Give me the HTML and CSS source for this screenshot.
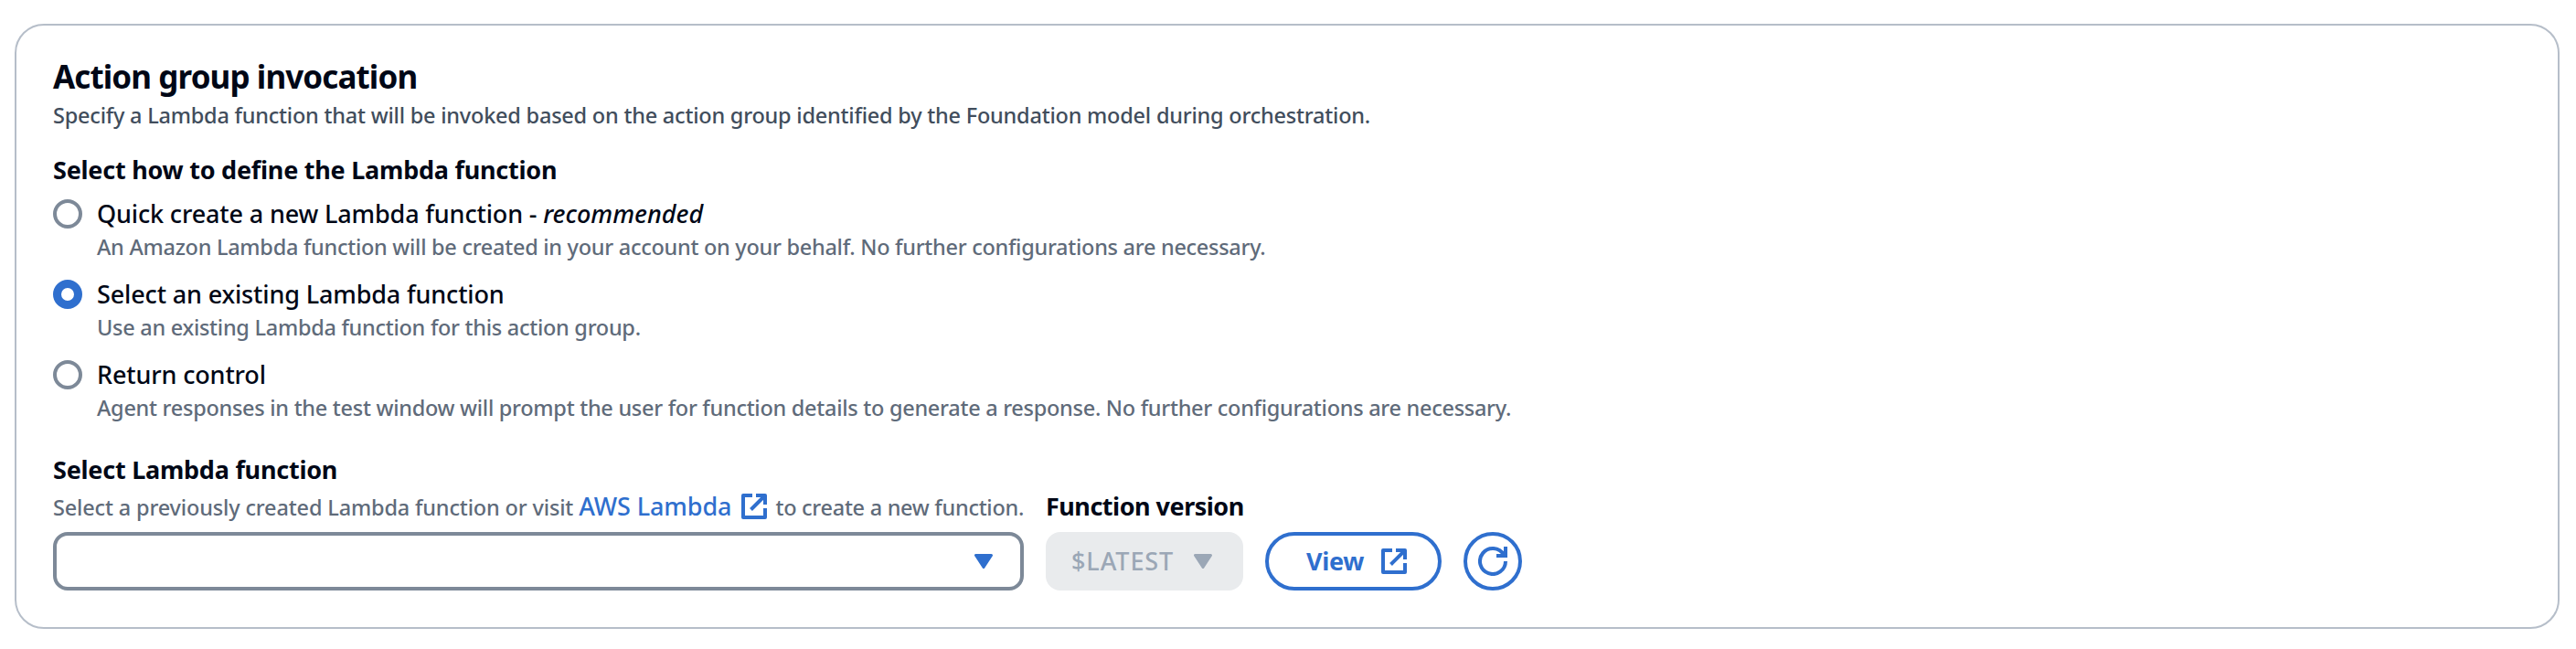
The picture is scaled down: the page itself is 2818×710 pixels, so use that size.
FILE: index.html
```
<!DOCTYPE html>
<html lang="en">
<head>
<meta charset="utf-8">
<title>Action group invocation</title>
<link rel="stylesheet" href="styles.css">
</head>
<body>
<section class="card">
  <h2 class="title">Action group invocation</h2>
  <p class="subtitle">Specify a Lambda function that will be invoked based on the action group identified by the Foundation model during orchestration.</p>

  <div class="label group-label">Select how to define the Lambda function</div>
  <div class="options">
    <div class="option">
      <span class="radio"></span>
      <div>
        <div class="option-label quick">Quick create a new Lambda function - <em>recommended</em></div>
        <div class="option-text">An Amazon Lambda function will be created in your account on your behalf. No further configurations are necessary.</div>
      </div>
    </div>
    <div class="option">
      <span class="radio radio-checked"></span>
      <div>
        <div class="option-label">Select an existing Lambda function</div>
        <div class="option-text">Use an existing Lambda function for this action group.</div>
      </div>
    </div>
    <div class="option">
      <span class="radio"></span>
      <div>
        <div class="option-label">Return control</div>
        <div class="option-text">Agent responses in the test window will prompt the user for function details to generate a response. No further configurations are necessary.</div>
      </div>
    </div>
  </div>

  <div class="fields">
    <div class="field function-field">
      <div class="label">Select Lambda function</div>
      <div class="hint"><span class="hint-lead">Select a previously created Lambda function or visit</span><a class="link">AWS Lambda<svg class="external" viewBox="0 0 28 28"><path d="M12 2H2V26H26V16M16 2H26V12M26 2L10.500 17.500"/></svg></a><span>to create a new function.</span></div>
      <div class="select">
        <svg class="caret" viewBox="0 0 20 16"><path d="M1.500 1.500H18.500L10 14.500Z"/></svg>
      </div>
    </div>
    <div class="field version-field">
      <div class="label version-label">Function version</div>
      <div class="select select-disabled">
        <span class="value">$LATEST</span>
        <svg class="caret" viewBox="0 0 20 16"><path d="M1.500 1.500H18.500L10 14.500Z"/></svg>
      </div>
    </div>
    <button class="button"><span class="value">View</span><svg class="external" viewBox="0 0 28 28"><path d="M12 2H2V26H26V16M16 2H26V12M26 2L10.500 17.500"/></svg></button>
    <button class="button button-round" aria-label="Refresh"><svg class="refresh" viewBox="0 0 32 32"><path d="M30 16A14 14 0 1 1 28 8.800M30 0V10H20"/></svg></button>
  </div>
</section>
</body>
</html>
```
FILE: styles.css
```
* { box-sizing: border-box; }

body {
  margin: 0;
  padding: 26px 18px 22px 16px;
  background: #fff;
  color: #000716;
  font-family: "Noto Sans", "Open Sans", sans-serif;
  font-size: 27px;
  font-weight: 500;
}

.card {
  height: 662px;
  padding: 34px 40px 40px;
  border: 2px solid #b6bec9;
  border-radius: 32px;
}

.title {
  margin: 0;
  font-size: 35px;
  line-height: 44px;
  letter-spacing: -0.9px;
}

.subtitle {
  margin: 0;
  color: #414d5c;
  font-size: 23.5px;
  line-height: 40px;
  letter-spacing: -0.22px;
}

.label {
  font-weight: 700;
  line-height: 44px;
  letter-spacing: -0.24px;
}

.group-label { margin-top: 18px; }

.options {
  display: flex;
  flex-direction: column;
  gap: 16px;
  padding-top: 6px;
}

.option {
  display: flex;
  gap: 16px;
  height: 72px;
}

.radio {
  flex: none;
  width: 32px;
  height: 32px;
  margin-top: 4px;
  border: 4px solid #7d8998;
  border-radius: 50%;
}

.radio-checked { border: 9px solid #2f6fce; }

.option-label { line-height: 40px; letter-spacing: -0.15px; }
.option-label em { letter-spacing: 0; font-weight: 500; }

.option-text {
  color: #5f6b7a;
  font-size: 23.5px;
  line-height: 32px;
  letter-spacing: -0.28px;
}

.fields {
  display: flex;
  align-items: flex-end;
  gap: 24px;
  margin-top: 29px;
}

.function-field { width: 1062px; }
.function-field .label { padding-top: 1px; }
.version-field { width: 216px; }
.version-label { letter-spacing: -0.5px; white-space: nowrap; margin-bottom: 6px; }

.hint {
  display: flex;
  align-items: baseline;
  height: 40px;
  margin-top: -2px;
  margin-bottom: 8px;
  color: #5f6b7a;
  font-size: 23.5px;
  line-height: 40px;
  letter-spacing: -0.28px;
  white-space: nowrap;
}

.hint-lead { letter-spacing: -0.16px; }

.link {
  margin: 0 9px 0 6px;
  color: #2f6fce;
  font-size: 27px;
  letter-spacing: -0.1px;
}

.external {
  width: 28px;
  height: 28px;
  fill: none;
  stroke: currentColor;
  stroke-width: 4;
  stroke-linejoin: round;
}

.link .external { margin-left: 11px; vertical-align: -4px; }

.select {
  display: flex;
  align-items: center;
  justify-content: flex-end;
  height: 64px;
  padding-right: 30px;
  border: 4px solid #7d8998;
  border-radius: 16px;
}

.caret {
  width: 20px;
  height: 16px;
  fill: #2f6fce;
  stroke: #2f6fce;
  stroke-width: 3;
  stroke-linejoin: round;
}

.select-disabled {
  justify-content: space-between;
  padding: 0 34px 0 28px;
  border: 0;
  background: #e9ebed;
  color: #9ba7b6;
  letter-spacing: 0.9px;
}

.select-disabled .caret { fill: #9ba7b6; stroke: #9ba7b6; }

.value { padding-bottom: 2px; }

.button {
  display: flex;
  align-items: center;
  justify-content: space-between;
  width: 193px;
  height: 64px;
  padding: 0 34px 0 41px;
  border: 4px solid #2f6fce;
  border-radius: 32px;
  background: #fff;
  color: #2f6fce;
  font: 700 27px "Noto Sans", "Open Sans", sans-serif;
  letter-spacing: -0.3px;
}

.button-round { width: 64px; padding: 0; justify-content: center; }

.refresh {
  width: 32px;
  height: 32px;
  fill: none;
  stroke: currentColor;
  stroke-width: 4;
}
```
